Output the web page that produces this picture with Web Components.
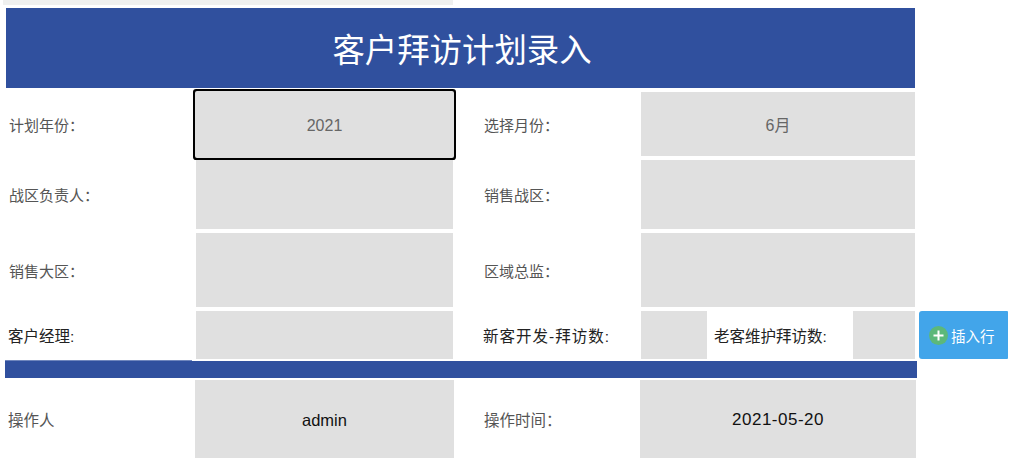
<!DOCTYPE html>
<html lang="zh">
<head>
<meta charset="utf-8">
<title>客户拜访计划录入</title>
<style>
  html, body { margin: 0; background: #fff; overflow: hidden; }
  body { font-family: "Liberation Sans", "Noto Sans CJK SC", sans-serif; }
</style>
</head>
<body>
<visit-form>
  <form-title>客户拜访计划录入</form-title>

  <form-row style="--gap:4px; --h:65px">
    <field-label style="--pad:3px">计划年份：</field-label>
    <field-cell selected muted style="padding-top:2px">2021</field-cell>
    <field-label style="--pad:31px">选择月份：</field-label>
    <field-cell muted style="margin-bottom:1px">6月</field-cell>
  </form-row>

  <form-row style="--gap:3px; --h:69px">
    <field-label style="--pad:3px">战区负责人：</field-label>
    <field-cell></field-cell>
    <field-label style="--pad:31px">销售战区：</field-label>
    <field-cell></field-cell>
  </form-row>

  <form-row style="--gap:4px; --h:74px">
    <field-label style="--pad:3px">销售大区：</field-label>
    <field-cell></field-cell>
    <field-label style="--pad:31px">区域总监：</field-label>
    <field-cell></field-cell>
  </form-row>

  <form-row style="--gap:4px; --h:47px">
    <field-label dark style="--pad:2px">客户经理:</field-label>
    <field-cell></field-cell>
    <field-label dark style="--pad:30px; letter-spacing:1px">新客开发-拜访数:</field-label>
    <split-cell>
      <field-cell></field-cell>
      <field-label dark style="--pad:7px">老客维护拜访数:</field-label>
      <field-cell></field-cell>
    </split-cell>
    <insert-button>插入行</insert-button>
  </form-row>

  <form-bar></form-bar>

  <form-row style="--gap:2px; --h:78px">
    <field-label style="--pad:2px; font-size:15.5px">操作人</field-label>
    <field-cell wide style="padding-top:2px; font-size:16.5px">admin</field-cell>
    <field-label style="--pad:31px; font-size:15.5px">操作时间：</field-label>
    <field-cell wide style="padding-top:2px; letter-spacing:.5px">2021-05-20</field-cell>
  </form-row>
</visit-form>

<script>
// helper, every element gets its own open shadow root
function shadow(el, html) {
  el.attachShadow({ mode: 'open' }).innerHTML = html;
}

class VisitForm extends HTMLElement {
  constructor() {
    super();
    shadow(this, `
      <style>
        :host { display: block; padding-left: 6px; }
        .strip { height: 5px; width: 450px; margin-left: -3px; background: #eff0ef; }
      </style>
      <div class="strip"></div>
      <slot></slot>
    `);
  }
}
customElements.define('visit-form', VisitForm);

class FormTitle extends HTMLElement {
  constructor() {
    super();
    shadow(this, `
      <style>
        :host {
          display: flex; align-items: center; justify-content: center;
          width: 909px; height: 80px; margin-top: 3px; padding: 0 0 2px 3px;
          box-sizing: border-box;
          background: #30509e; color: #fff; font-size: 32.4px;
        }
      </style>
      <slot></slot>
    `);
  }
}
customElements.define('form-title', FormTitle);

class FormRow extends HTMLElement {
  constructor() {
    super();
    shadow(this, `
      <style>
        :host {
          display: grid;
          grid-template-columns: 190px 257px 188px 274px 93px;
          height: var(--h);
          margin-top: var(--gap);
        }
      </style>
      <slot></slot>
    `);
  }
}
customElements.define('form-row', FormRow);

class FieldLabel extends HTMLElement {
  constructor() {
    super();
    shadow(this, `
      <style>
        :host {
          display: flex; align-items: center;
          padding-left: var(--pad, 0);
          color: #555; font-size: 15px; white-space: nowrap;
        }
        :host([dark]) { color: #222; font-size: 15.5px; }
      </style>
      <slot></slot>
    `);
  }
}
customElements.define('field-label', FieldLabel);

class FieldCell extends HTMLElement {
  constructor() {
    super();
    shadow(this, `
      <style>
        :host {
          display: flex; align-items: center; justify-content: center;
          box-sizing: border-box;
          background: #e0e0e0; color: #111; font-size: 17px;
        }
        :host([muted]) { color: #666; font-size: 16px; }
        :host([wide]) { margin: 0 -1px; }
        :host([selected]) {
          position: relative; z-index: 1;
          box-shadow: 0 0 0 1px #e0e0e0, 0 0 0 3px #000;
          border-radius: 1px;
        }
      </style>
      <slot></slot>
    `);
  }
}
customElements.define('field-cell', FieldCell);

class SplitCell extends HTMLElement {
  constructor() {
    super();
    shadow(this, `
      <style>
        :host { display: grid; grid-template-columns: 66px 146px 62px; }
      </style>
      <slot></slot>
    `);
  }
}
customElements.define('split-cell', SplitCell);

class FormBar extends HTMLElement {
  constructor() {
    super();
    shadow(this, `
      <style>
        :host {
          display: block; position: relative; width: 912px; height: 17px;
          margin: 3px 0 0 -1px; background: #30509e;
        }
        /* left part of the bar sits one pixel higher */
        :host::before {
          content: ""; position: absolute; left: 0; top: -1px;
          width: 187px; height: 1px; background: #6f86bd;
        }
      </style>
    `);
  }
}
customElements.define('form-bar', FormBar);

class InsertButton extends HTMLElement {
  constructor() {
    super();
    shadow(this, `
      <style>
        :host {
          display: flex; align-items: center; gap: 3px;
          box-sizing: border-box; width: 89px; height: 48px; margin-left: 4px;
          padding-left: 10px;
          background: #42a5ea; border-radius: 3px 1px 1px 3px;
          color: #fff; font-size: 14.5px; cursor: pointer;
        }
        svg { width: 19px; height: 19px; flex: none; }
      </style>
      <svg viewBox="0 0 19 19">
        <circle cx="9.5" cy="9.5" r="9.5" fill="#5cb87a"/>
        <path d="M9.5 4.5v10M4.5 9.5h10" stroke="#fff" stroke-width="2" fill="none"/>
      </svg>
      <slot></slot>
    `);
  }
}
customElements.define('insert-button', InsertButton);
</script>
</body>
</html>
